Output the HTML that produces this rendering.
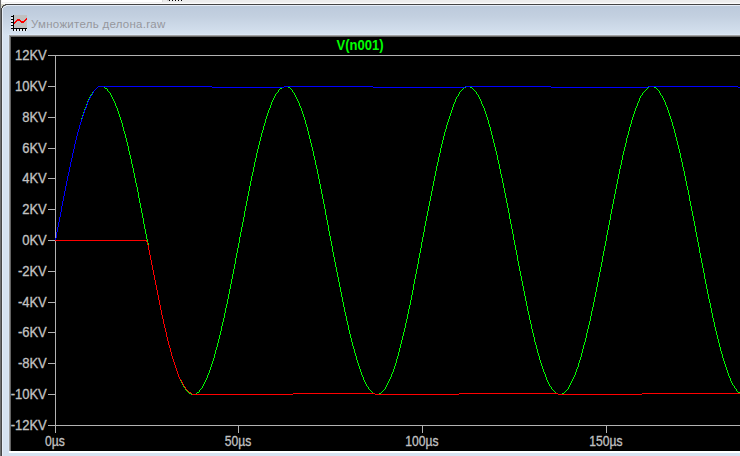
<!DOCTYPE html>
<html><head><meta charset="utf-8"><title>plot</title>
<style>
html,body{margin:0;padding:0;}
body{width:740px;height:456px;overflow:hidden;position:relative;background:#d6e2f0;font-family:"Liberation Sans",sans-serif;}
#top{position:absolute;left:0;top:0;width:740px;height:4px;background:#ececec;}
#topw{position:absolute;left:0;top:0;width:162px;height:2px;background:#fff;}
#sep{position:absolute;left:162px;top:0;width:1px;height:2px;background:#dcdcdc;}
#t2{position:absolute;left:0;top:2px;width:740px;height:1px;background:#f0f0f0;}
#t3{position:absolute;left:0;top:3px;width:740px;height:1px;background:#fbfbfb;}
.dot{position:absolute;top:0;width:1px;height:1px;background:#000;}
#tb{position:absolute;left:0;top:4px;width:740px;height:31px;background:linear-gradient(#bccadb 0%,#bccadb 6%,#c3d0e0 40%,#d6e2f0 100%);}
#title{position:absolute;left:31px;top:16px;font-size:11.5px;letter-spacing:0.27px;line-height:16px;color:#96979d;white-space:nowrap;transform-origin:0 0;}
#pl{position:absolute;left:9px;top:35px;width:731px;height:418px;background:#fff;}
#pa{position:absolute;left:9px;top:35px;width:731px;height:416px;background:#a0a0a0;}
#pb{position:absolute;left:10px;top:36px;width:730px;height:415px;background:#646464;}
#pc{position:absolute;left:11px;top:37px;width:729px;height:414px;background:#000;}
svg{position:absolute;left:0;top:0;}
.yl{position:absolute;left:0;width:46.8px;text-align:right;font-size:13.7px;line-height:16px;color:#c2c2c2;white-space:nowrap;transform:scale(0.95,1.02);transform-origin:100% 60%;-webkit-text-stroke:0.3px #c2c2c2;}
.xl{position:absolute;top:434px;width:60px;text-align:center;font-size:13.7px;line-height:16px;color:#c2c2c2;white-space:nowrap;transform:scale(0.885,1.03);transform-origin:50% 50%;-webkit-text-stroke:0.3px #c2c2c2;}
#tr{position:absolute;left:300px;width:120px;top:37px;text-align:center;font-weight:bold;font-size:14px;line-height:16px;color:#00ff00;white-space:nowrap;transform:scaleX(0.93);transform-origin:50% 50%;}
</style></head><body>
<div id="top"></div><div id="topw"></div><div id="sep"></div><div id="t2"></div><div id="t3"></div>
<div class="dot" style="left:167px;width:2px;background:#cfcfcf"></div>
<div class="dot" style="left:169px"></div><div class="dot" style="left:172px"></div><div class="dot" style="left:175px"></div><div class="dot" style="left:178px"></div><div class="dot" style="left:181px"></div>
<div id="tb"></div>
<svg id="chrome" width="740" height="456" viewBox="0 0 740 456" shape-rendering="crispEdges">
<path d="M0 0h1v456h-1z" fill="#6e6e6e"/>
<path d="M1 0h1v4h-1z" fill="#f4f4f4"/>
<path d="M1 4h4v1h-4zM1 5h2v1h-2zM1 6h1v2h-1z" fill="#d6d6c8"/>
<path d="M5 4h735v1h-735zM3 5h2v1h-2zM2 6h1v2h-1zM1 8h1v448h-1z" fill="#454545"/>
<path d="M5 5h1v1h-1zM3 6h1v1h-1z" fill="#8c9097"/>
<path d="M6 5h734v1h-734zM4 6h2v1h-2zM3 7h1v1h-1zM2 8h1v448h-1z" fill="#e6edf7"/>
<path d="M8 34h732v1h-732zM8 35h1v418h-1z" fill="#dbe7f6"/>
</svg>
<svg id="icon" width="40" height="40" viewBox="0 0 40 40" shape-rendering="crispEdges">
<rect x="14" y="15" width="13" height="13" fill="#c0c0c0"/>
<path d="M13 15h1v16h-1zM11 28h16v1h-16zM11 16h2v1h-2zM11 19h2v1h-2zM11 22h2v1h-2zM11 25h2v1h-2zM16 29h1v2h-1zM19 29h1v2h-1zM22 29h1v2h-1zM25 29h1v2h-1z" fill="#000"/>
<path d="M14 22h1v2h-1zM15 21h1v2h-1zM16 20h1v2h-1zM17 19h3v2h-3zM20 20h1v2h-1zM21 21h3v2h-3zM24 20h1v2h-1zM25 19h1v2h-1zM26 18h1v2h-1z" fill="#ff0000"/>
<path d="M11 17h2v2h-2zM11 20h2v2h-2zM11 23h2v2h-2zM11 26h2v2h-2zM14 29h2v2h-2zM17 29h2v2h-2zM20 29h2v2h-2zM23 29h2v2h-2zM26 29h1v2h-1z" fill="#ffffff" fill-opacity="0.55"/>
</svg>
<div id="title">Умножитель делона.raw</div>
<div id="pl"></div><div id="pa"></div><div id="pb"></div><div id="pc"></div>
<svg width="740" height="456" viewBox="0 0 740 456" shape-rendering="crispEdges">
<path d="M55 55h685v1h-685zM55 425h685v1h-685zM55 55h1v378h-1zM48 55h7v1h-7zM48 86h7v1h-7zM48 117h7v1h-7zM48 148h7v1h-7zM48 178h7v1h-7zM48 209h7v1h-7zM48 240h7v1h-7zM48 271h7v1h-7zM48 302h7v1h-7zM48 332h7v1h-7zM48 363h7v1h-7zM48 394h7v1h-7zM48 425h7v1h-7zM238 425h1v8h-1zM422 425h1v8h-1zM606 425h1v8h-1z" fill="#b2b2b2"/>
<path d="M55 238h1v3h-1zM56 232h1v6h-1zM57 227h1v5h-1zM58 222h1v5h-1zM59 217h1v5h-1zM60 212h1v5h-1zM61 206h1v6h-1zM62 201h1v5h-1zM63 196h1v5h-1zM64 191h1v5h-1zM65 186h1v5h-1zM66 181h1v5h-1zM67 176h1v5h-1zM68 172h1v4h-1zM69 167h1v5h-1zM70 162h1v5h-1zM71 158h1v4h-1zM72 153h1v5h-1zM73 149h1v4h-1zM74 144h1v5h-1zM75 140h1v4h-1zM76 136h1v4h-1zM77 132h1v4h-1zM78 129h1v3h-1zM79 125h1v4h-1zM80 122h1v3h-1zM81 118h1v4h-1zM82 115h1v3h-1zM83 112h1v3h-1zM84 109h1v3h-1zM85 107h1v2h-1zM86 104h1v3h-1zM87 101h1v3h-1zM88 99h1v2h-1zM89 97h1v2h-1zM90 95h1v2h-1zM91 94h1v1h-1zM92 92h1v2h-1zM93 91h1v1h-1zM94 90h1v1h-1zM95 89h1v1h-1zM96 88h1v1h-1zM97 87h1v1h-1zM98 86h1v1h-1zM99 86h1v1h-1zM100 86h1v1h-1zM101 86h1v1h-1zM102 86h1v1h-1zM103 86h1v1h-1zM104 87h1v1h-1zM105 88h1v1h-1zM106 88h1v1h-1zM107 89h1v2h-1zM108 91h1v1h-1zM109 92h1v1h-1zM110 93h1v2h-1zM111 95h1v2h-1zM112 97h1v2h-1zM113 99h1v2h-1zM114 101h1v2h-1zM115 103h1v3h-1zM116 106h1v2h-1zM117 108h1v3h-1zM118 111h1v3h-1zM119 114h1v3h-1zM120 117h1v3h-1zM121 120h1v3h-1zM122 123h1v4h-1zM123 127h1v4h-1zM124 131h1v3h-1zM125 134h1v4h-1zM126 138h1v4h-1zM127 142h1v4h-1zM128 146h1v5h-1zM129 151h1v4h-1zM130 155h1v4h-1zM131 159h1v5h-1zM132 164h1v4h-1zM133 168h1v5h-1zM134 173h1v5h-1zM135 178h1v5h-1zM136 183h1v4h-1zM137 187h1v5h-1zM138 192h1v6h-1zM139 198h1v5h-1zM140 203h1v5h-1zM141 208h1v5h-1zM142 213h1v5h-1zM143 218h1v6h-1zM144 224h1v5h-1zM145 229h1v5h-1zM146 234h1v5h-1zM147 239h1v4h-1zM148 243h1v5h-1zM149 250h1v5h-1zM150 255h1v4h-1zM151 260h1v5h-1zM152 265h1v5h-1zM153 270h1v5h-1zM154 275h1v5h-1zM155 280h1v5h-1zM156 285h1v5h-1zM157 290h1v5h-1zM158 295h1v5h-1zM159 300h1v5h-1zM160 305h1v5h-1zM161 310h1v5h-1zM162 315h1v4h-1zM163 319h1v5h-1zM164 324h1v4h-1zM165 328h1v4h-1zM166 332h1v5h-1zM167 337h1v4h-1zM168 341h1v4h-1zM169 345h1v3h-1zM170 348h1v4h-1zM171 352h1v4h-1zM172 356h1v3h-1zM173 359h1v3h-1zM174 362h1v3h-1zM175 365h1v3h-1zM176 368h1v3h-1zM177 371h1v3h-1zM178 374h1v3h-1zM179 377h1v2h-1zM180 379h1v2h-1zM181 381h1v2h-1zM182 383h1v2h-1zM183 385h1v2h-1zM184 387h1v1h-1zM185 388h1v2h-1zM186 390h1v1h-1zM187 391h1v1h-1zM188 392h1v1h-1zM189 393h1v1h-1zM190 393h1v1h-1zM191 394h1v1h-1zM192 394h1v1h-1zM193 394h1v1h-1zM194 394h1v1h-1zM195 394h1v1h-1zM196 393h1v1h-1zM197 392h1v1h-1zM198 392h1v1h-1zM199 390h1v2h-1zM200 389h1v1h-1zM201 388h1v1h-1zM202 386h1v2h-1zM203 384h1v2h-1zM204 382h1v2h-1zM205 380h1v2h-1zM206 378h1v2h-1zM207 375h1v3h-1zM208 373h1v2h-1zM209 370h1v3h-1zM210 367h1v3h-1zM211 364h1v3h-1zM212 361h1v3h-1zM213 358h1v3h-1zM214 354h1v4h-1zM215 350h1v4h-1zM216 347h1v3h-1zM217 343h1v4h-1zM218 339h1v4h-1zM219 335h1v4h-1zM220 331h1v4h-1zM221 326h1v5h-1zM222 322h1v4h-1zM223 318h1v4h-1zM224 313h1v5h-1zM225 308h1v5h-1zM226 304h1v4h-1zM227 299h1v5h-1zM228 294h1v5h-1zM229 289h1v5h-1zM230 284h1v5h-1zM231 279h1v5h-1zM232 274h1v5h-1zM233 269h1v5h-1zM234 264h1v5h-1zM235 258h1v6h-1zM236 253h1v5h-1zM237 248h1v5h-1zM238 243h1v5h-1zM239 237h1v6h-1zM240 232h1v5h-1zM241 227h1v5h-1zM242 222h1v5h-1zM243 217h1v5h-1zM244 211h1v6h-1zM245 206h1v5h-1zM246 201h1v5h-1zM247 196h1v5h-1zM248 191h1v5h-1zM249 186h1v5h-1zM250 181h1v5h-1zM251 176h1v5h-1zM252 172h1v4h-1zM253 167h1v5h-1zM254 162h1v5h-1zM255 158h1v4h-1zM256 153h1v5h-1zM257 149h1v4h-1zM258 145h1v4h-1zM259 141h1v4h-1zM260 137h1v4h-1zM261 133h1v4h-1zM262 130h1v3h-1zM263 126h1v4h-1zM264 123h1v3h-1zM265 119h1v4h-1zM266 116h1v3h-1zM267 113h1v3h-1zM268 110h1v3h-1zM269 108h1v2h-1zM270 105h1v3h-1zM271 102h1v3h-1zM272 100h1v2h-1zM273 98h1v2h-1zM274 96h1v2h-1zM275 94h1v2h-1zM276 93h1v1h-1zM277 92h1v1h-1zM278 90h1v2h-1zM279 89h1v1h-1zM280 88h1v1h-1zM281 88h1v1h-1zM282 87h1v1h-1zM283 87h1v1h-1zM284 86h1v1h-1zM285 86h1v1h-1zM286 86h1v1h-1zM287 86h1v1h-1zM288 87h1v1h-1zM289 87h1v1h-1zM290 88h1v1h-1zM291 89h1v1h-1zM292 90h1v2h-1zM293 92h1v1h-1zM294 93h1v2h-1zM295 95h1v2h-1zM296 97h1v2h-1zM297 99h1v2h-1zM298 101h1v2h-1zM299 103h1v3h-1zM300 106h1v2h-1zM301 108h1v3h-1zM302 111h1v3h-1zM303 114h1v3h-1zM304 117h1v3h-1zM305 120h1v4h-1zM306 124h1v3h-1zM307 127h1v4h-1zM308 131h1v4h-1zM309 135h1v4h-1zM310 139h1v4h-1zM311 143h1v4h-1zM312 147h1v4h-1zM313 151h1v5h-1zM314 156h1v4h-1zM315 160h1v5h-1zM316 165h1v4h-1zM317 169h1v5h-1zM318 174h1v5h-1zM319 179h1v5h-1zM320 184h1v5h-1zM321 189h1v5h-1zM322 194h1v5h-1zM323 199h1v5h-1zM324 204h1v5h-1zM325 209h1v6h-1zM326 215h1v5h-1zM327 220h1v5h-1zM328 225h1v6h-1zM329 231h1v5h-1zM330 236h1v5h-1zM331 241h1v5h-1zM332 246h1v6h-1zM333 252h1v5h-1zM334 257h1v5h-1zM335 262h1v5h-1zM336 267h1v5h-1zM337 272h1v5h-1zM338 277h1v5h-1zM339 282h1v5h-1zM340 287h1v5h-1zM341 292h1v5h-1zM342 297h1v5h-1zM343 302h1v5h-1zM344 307h1v5h-1zM345 312h1v4h-1zM346 316h1v5h-1zM347 321h1v4h-1zM348 325h1v5h-1zM349 330h1v4h-1zM350 334h1v4h-1zM351 338h1v4h-1zM352 342h1v4h-1zM353 346h1v3h-1zM354 349h1v4h-1zM355 353h1v3h-1zM356 356h1v4h-1zM357 360h1v3h-1zM358 363h1v3h-1zM359 366h1v3h-1zM360 369h1v3h-1zM361 372h1v3h-1zM362 375h1v2h-1zM363 377h1v3h-1zM364 380h1v2h-1zM365 382h1v2h-1zM366 384h1v2h-1zM367 386h1v1h-1zM368 387h1v2h-1zM369 389h1v1h-1zM370 390h1v1h-1zM371 391h1v1h-1zM372 392h1v1h-1zM373 393h1v1h-1zM374 393h1v1h-1zM375 394h1v1h-1zM376 394h1v1h-1zM377 394h1v1h-1zM378 394h1v1h-1zM379 393h1v1h-1zM380 393h1v1h-1zM381 392h1v1h-1zM382 391h1v1h-1zM383 390h1v1h-1zM384 389h1v1h-1zM385 387h1v2h-1zM386 385h1v2h-1zM387 383h1v2h-1zM388 381h1v2h-1zM389 379h1v2h-1zM390 377h1v2h-1zM391 374h1v3h-1zM392 372h1v2h-1zM393 369h1v3h-1zM394 366h1v3h-1zM395 363h1v3h-1zM396 359h1v4h-1zM397 356h1v3h-1zM398 352h1v4h-1zM399 348h1v4h-1zM400 344h1v4h-1zM401 340h1v4h-1zM402 336h1v4h-1zM403 332h1v4h-1zM404 328h1v4h-1zM405 323h1v5h-1zM406 319h1v4h-1zM407 314h1v5h-1zM408 309h1v5h-1zM409 305h1v4h-1zM410 300h1v5h-1zM411 295h1v5h-1zM412 290h1v5h-1zM413 284h1v6h-1zM414 279h1v5h-1zM415 274h1v5h-1zM416 269h1v5h-1zM417 264h1v5h-1zM418 258h1v6h-1zM419 253h1v5h-1zM420 248h1v5h-1zM421 242h1v6h-1zM422 237h1v5h-1zM423 232h1v5h-1zM424 226h1v6h-1zM425 221h1v5h-1zM426 216h1v5h-1zM427 211h1v5h-1zM428 206h1v5h-1zM429 201h1v5h-1zM430 196h1v5h-1zM431 191h1v5h-1zM432 186h1v5h-1zM433 181h1v5h-1zM434 176h1v5h-1zM435 171h1v5h-1zM436 166h1v5h-1zM437 162h1v4h-1zM438 157h1v5h-1zM439 153h1v4h-1zM440 148h1v5h-1zM441 144h1v4h-1zM442 140h1v4h-1zM443 136h1v4h-1zM444 132h1v4h-1zM445 129h1v3h-1zM446 125h1v4h-1zM447 122h1v3h-1zM448 119h1v3h-1zM449 116h1v3h-1zM450 113h1v3h-1zM451 110h1v3h-1zM452 107h1v3h-1zM453 104h1v3h-1zM454 102h1v2h-1zM455 99h1v3h-1zM456 97h1v2h-1zM457 96h1v1h-1zM458 94h1v2h-1zM459 92h1v2h-1zM460 91h1v1h-1zM461 90h1v1h-1zM462 89h1v1h-1zM463 88h1v1h-1zM464 87h1v1h-1zM465 87h1v1h-1zM466 86h1v1h-1zM467 86h1v1h-1zM468 86h1v1h-1zM469 86h1v1h-1zM470 87h1v1h-1zM471 87h1v1h-1zM472 88h1v1h-1zM473 89h1v1h-1zM474 90h1v1h-1zM475 91h1v1h-1zM476 92h1v2h-1zM477 94h1v1h-1zM478 95h1v2h-1zM479 97h1v2h-1zM480 99h1v2h-1zM481 101h1v3h-1zM482 104h1v2h-1zM483 106h1v2h-1zM484 108h1v3h-1zM485 111h1v3h-1zM486 114h1v3h-1zM487 117h1v3h-1zM488 120h1v4h-1zM489 124h1v3h-1zM490 127h1v4h-1zM491 131h1v4h-1zM492 135h1v4h-1zM493 139h1v4h-1zM494 143h1v4h-1zM495 147h1v4h-1zM496 151h1v4h-1zM497 155h1v5h-1zM498 160h1v4h-1zM499 164h1v5h-1zM500 169h1v5h-1zM501 174h1v4h-1zM502 178h1v5h-1zM503 183h1v5h-1zM504 188h1v5h-1zM505 193h1v5h-1zM506 198h1v5h-1zM507 203h1v5h-1zM508 208h1v5h-1zM509 213h1v6h-1zM510 219h1v5h-1zM511 224h1v5h-1zM512 229h1v5h-1zM513 234h1v6h-1zM514 240h1v5h-1zM515 245h1v5h-1zM516 250h1v5h-1zM517 255h1v6h-1zM518 261h1v5h-1zM519 266h1v5h-1zM520 271h1v5h-1zM521 276h1v5h-1zM522 281h1v5h-1zM523 286h1v5h-1zM524 291h1v5h-1zM525 296h1v5h-1zM526 301h1v5h-1zM527 306h1v5h-1zM528 311h1v4h-1zM529 315h1v5h-1zM530 320h1v4h-1zM531 324h1v5h-1zM532 329h1v4h-1zM533 333h1v4h-1zM534 337h1v5h-1zM535 342h1v3h-1zM536 345h1v4h-1zM537 349h1v4h-1zM538 353h1v3h-1zM539 356h1v4h-1zM540 360h1v3h-1zM541 363h1v3h-1zM542 366h1v3h-1zM543 369h1v3h-1zM544 372h1v2h-1zM545 374h1v3h-1zM546 377h1v3h-1zM547 380h1v2h-1zM548 382h1v2h-1zM549 384h1v2h-1zM550 386h1v1h-1zM551 387h1v2h-1zM552 389h1v1h-1zM553 390h1v1h-1zM554 391h1v1h-1zM555 392h1v1h-1zM556 393h1v1h-1zM557 393h1v1h-1zM558 394h1v1h-1zM559 394h1v1h-1zM560 394h1v1h-1zM561 394h1v1h-1zM562 393h1v1h-1zM563 393h1v1h-1zM564 392h1v1h-1zM565 391h1v1h-1zM566 390h1v1h-1zM567 389h1v1h-1zM568 387h1v2h-1zM569 385h1v2h-1zM570 383h1v2h-1zM571 381h1v2h-1zM572 379h1v2h-1zM573 377h1v2h-1zM574 375h1v2h-1zM575 372h1v3h-1zM576 369h1v3h-1zM577 367h1v2h-1zM578 363h1v4h-1zM579 360h1v3h-1zM580 357h1v3h-1zM581 353h1v4h-1zM582 349h1v4h-1zM583 345h1v4h-1zM584 342h1v3h-1zM585 338h1v4h-1zM586 333h1v5h-1zM587 329h1v4h-1zM588 325h1v4h-1zM589 321h1v4h-1zM590 316h1v5h-1zM591 311h1v5h-1zM592 307h1v4h-1zM593 302h1v5h-1zM594 297h1v5h-1zM595 292h1v5h-1zM596 287h1v5h-1zM597 282h1v5h-1zM598 277h1v5h-1zM599 272h1v5h-1zM600 267h1v5h-1zM601 262h1v5h-1zM602 256h1v6h-1zM603 251h1v5h-1zM604 246h1v5h-1zM605 241h1v5h-1zM606 235h1v6h-1zM607 230h1v5h-1zM608 225h1v5h-1zM609 220h1v5h-1zM610 214h1v6h-1zM611 209h1v5h-1zM612 204h1v5h-1zM613 199h1v5h-1zM614 194h1v5h-1zM615 189h1v5h-1zM616 184h1v5h-1zM617 179h1v5h-1zM618 174h1v5h-1zM619 169h1v5h-1zM620 165h1v4h-1zM621 160h1v5h-1zM622 155h1v5h-1zM623 151h1v4h-1zM624 147h1v4h-1zM625 143h1v4h-1zM626 138h1v5h-1zM627 135h1v3h-1zM628 131h1v4h-1zM629 127h1v4h-1zM630 124h1v3h-1zM631 120h1v4h-1zM632 117h1v3h-1zM633 114h1v3h-1zM634 111h1v3h-1zM635 108h1v3h-1zM636 106h1v2h-1zM637 103h1v3h-1zM638 101h1v2h-1zM639 98h1v3h-1zM640 96h1v2h-1zM641 95h1v1h-1zM642 93h1v2h-1zM643 92h1v1h-1zM644 91h1v1h-1zM645 90h1v1h-1zM646 89h1v1h-1zM647 88h1v1h-1zM648 87h1v1h-1zM649 86h1v1h-1zM650 86h1v1h-1zM651 86h1v1h-1zM652 86h1v1h-1zM653 86h1v1h-1zM654 87h1v1h-1zM655 87h1v1h-1zM656 88h1v1h-1zM657 89h1v1h-1zM658 90h1v1h-1zM659 91h1v2h-1zM660 93h1v2h-1zM661 95h1v1h-1zM662 96h1v2h-1zM663 98h1v2h-1zM664 100h1v2h-1zM665 102h1v3h-1zM666 105h1v2h-1zM667 107h1v3h-1zM668 110h1v3h-1zM669 113h1v3h-1zM670 116h1v3h-1zM671 119h1v3h-1zM672 122h1v4h-1zM673 126h1v3h-1zM674 129h1v4h-1zM675 133h1v4h-1zM676 137h1v4h-1zM677 141h1v4h-1zM678 145h1v4h-1zM679 149h1v4h-1zM680 153h1v5h-1zM681 158h1v4h-1zM682 162h1v5h-1zM683 167h1v4h-1zM684 171h1v5h-1zM685 176h1v5h-1zM686 181h1v5h-1zM687 186h1v4h-1zM688 190h1v5h-1zM689 195h1v6h-1zM690 201h1v5h-1zM691 206h1v5h-1zM692 211h1v5h-1zM693 216h1v5h-1zM694 221h1v5h-1zM695 226h1v6h-1zM696 232h1v5h-1zM697 237h1v5h-1zM698 242h1v5h-1zM699 247h1v6h-1zM700 253h1v5h-1zM701 258h1v5h-1zM702 263h1v5h-1zM703 268h1v5h-1zM704 273h1v6h-1zM705 279h1v5h-1zM706 284h1v5h-1zM707 289h1v5h-1zM708 294h1v5h-1zM709 299h1v4h-1zM710 303h1v5h-1zM711 308h1v5h-1zM712 313h1v5h-1zM713 318h1v4h-1zM714 322h1v5h-1zM715 327h1v4h-1zM716 331h1v4h-1zM717 335h1v4h-1zM718 339h1v4h-1zM719 343h1v4h-1zM720 347h1v4h-1zM721 351h1v3h-1zM722 354h1v4h-1zM723 358h1v3h-1zM724 361h1v3h-1zM725 364h1v3h-1zM726 367h1v3h-1zM727 370h1v3h-1zM728 373h1v3h-1zM729 376h1v2h-1zM730 378h1v3h-1zM731 381h1v2h-1zM732 383h1v2h-1zM733 385h1v1h-1zM734 386h1v2h-1zM735 388h1v1h-1zM736 389h1v2h-1zM737 391h1v1h-1zM738 392h1v1h-1zM739 392h1v1h-1z" fill="#00ff00"/>
<path d="M55 238h1v3h-1zM56 232h1v6h-1zM57 227h1v5h-1zM58 222h1v5h-1zM59 217h1v5h-1zM60 212h1v5h-1zM61 206h1v6h-1zM62 201h1v5h-1zM63 196h1v5h-1zM64 191h1v5h-1zM65 186h1v5h-1zM66 181h1v5h-1zM67 176h1v5h-1zM68 172h1v4h-1zM69 167h1v5h-1zM70 162h1v5h-1zM71 158h1v4h-1zM72 153h1v5h-1zM73 149h1v4h-1zM74 144h1v5h-1zM75 140h1v4h-1zM76 136h1v4h-1zM77 132h1v4h-1zM78 129h1v3h-1zM79 125h1v4h-1zM80 122h1v3h-1zM81 119h1v3h-1zM82 116h1v3h-1zM83 113h1v3h-1zM84 110h1v3h-1zM85 108h1v2h-1zM86 105h1v3h-1zM87 102h1v3h-1zM88 100h1v2h-1zM89 98h1v2h-1zM90 96h1v2h-1zM91 95h1v1h-1zM92 93h1v2h-1zM93 91h1v2h-1zM94 90h1v1h-1zM95 89h1v1h-1zM96 88h1v1h-1zM97 87h1v1h-1zM98 86h114v1h-114zM212 87h72v1h-72zM284 86h89v1h-89zM373 87h92v1h-92zM465 86h86v1h-86zM551 87h97v1h-97zM648 86h90v1h-90zM738 87h2v1h-2z" fill="#0000ff"/>
<path d="M55 240h92v1h-92zM146 240h1v2h-1zM147 242h1v3h-1zM148 245h1v5h-1zM149 250h1v5h-1zM150 255h1v5h-1zM151 260h1v5h-1zM152 265h1v5h-1zM153 270h1v5h-1zM154 275h1v5h-1zM155 280h1v5h-1zM156 285h1v5h-1zM157 290h1v5h-1zM158 295h1v5h-1zM159 300h1v5h-1zM160 305h1v5h-1zM161 310h1v5h-1zM162 315h1v4h-1zM163 319h1v5h-1zM164 324h1v4h-1zM165 328h1v4h-1zM166 332h1v5h-1zM167 337h1v4h-1zM168 341h1v4h-1zM169 345h1v3h-1zM170 348h1v4h-1zM171 352h1v4h-1zM172 356h1v3h-1zM173 359h1v3h-1zM174 362h1v3h-1zM175 365h1v3h-1zM176 368h1v3h-1zM177 371h1v3h-1zM178 374h1v3h-1zM179 377h1v2h-1zM180 379h1v1h-1zM181 380h1v2h-1zM182 382h1v2h-1zM183 384h1v2h-1zM184 386h1v1h-1zM185 387h1v2h-1zM186 389h1v1h-1zM187 390h1v1h-1zM188 391h1v1h-1zM189 392h1v1h-1zM190 392h1v1h-1zM191 393h1v1h-1zM192 394h1v1h-1zM193 394h100v1h-100zM293 393h82v1h-82zM375 394h84v1h-84zM459 393h99v1h-99zM558 394h84v1h-84zM642 393h98v1h-98z" fill="#ff0000"/>
</svg>
<div class="yl" style="top:48px">12KV</div>
<div class="yl" style="top:79px">10KV</div>
<div class="yl" style="top:110px">8KV</div>
<div class="yl" style="top:141px">6KV</div>
<div class="yl" style="top:171px">4KV</div>
<div class="yl" style="top:202px">2KV</div>
<div class="yl" style="top:233px">0KV</div>
<div class="yl" style="top:264px">-2KV</div>
<div class="yl" style="top:295px">-4KV</div>
<div class="yl" style="top:325px">-6KV</div>
<div class="yl" style="top:356px">-8KV</div>
<div class="yl" style="top:387px">-10KV</div>
<div class="yl" style="top:418px">-12KV</div>
<div class="xl" style="left:25px">0µs</div>
<div class="xl" style="left:208px">50µs</div>
<div class="xl" style="left:392px">100µs</div>
<div class="xl" style="left:576px">150µs</div>

<div id="tr">V(n001)</div>
</body></html>
